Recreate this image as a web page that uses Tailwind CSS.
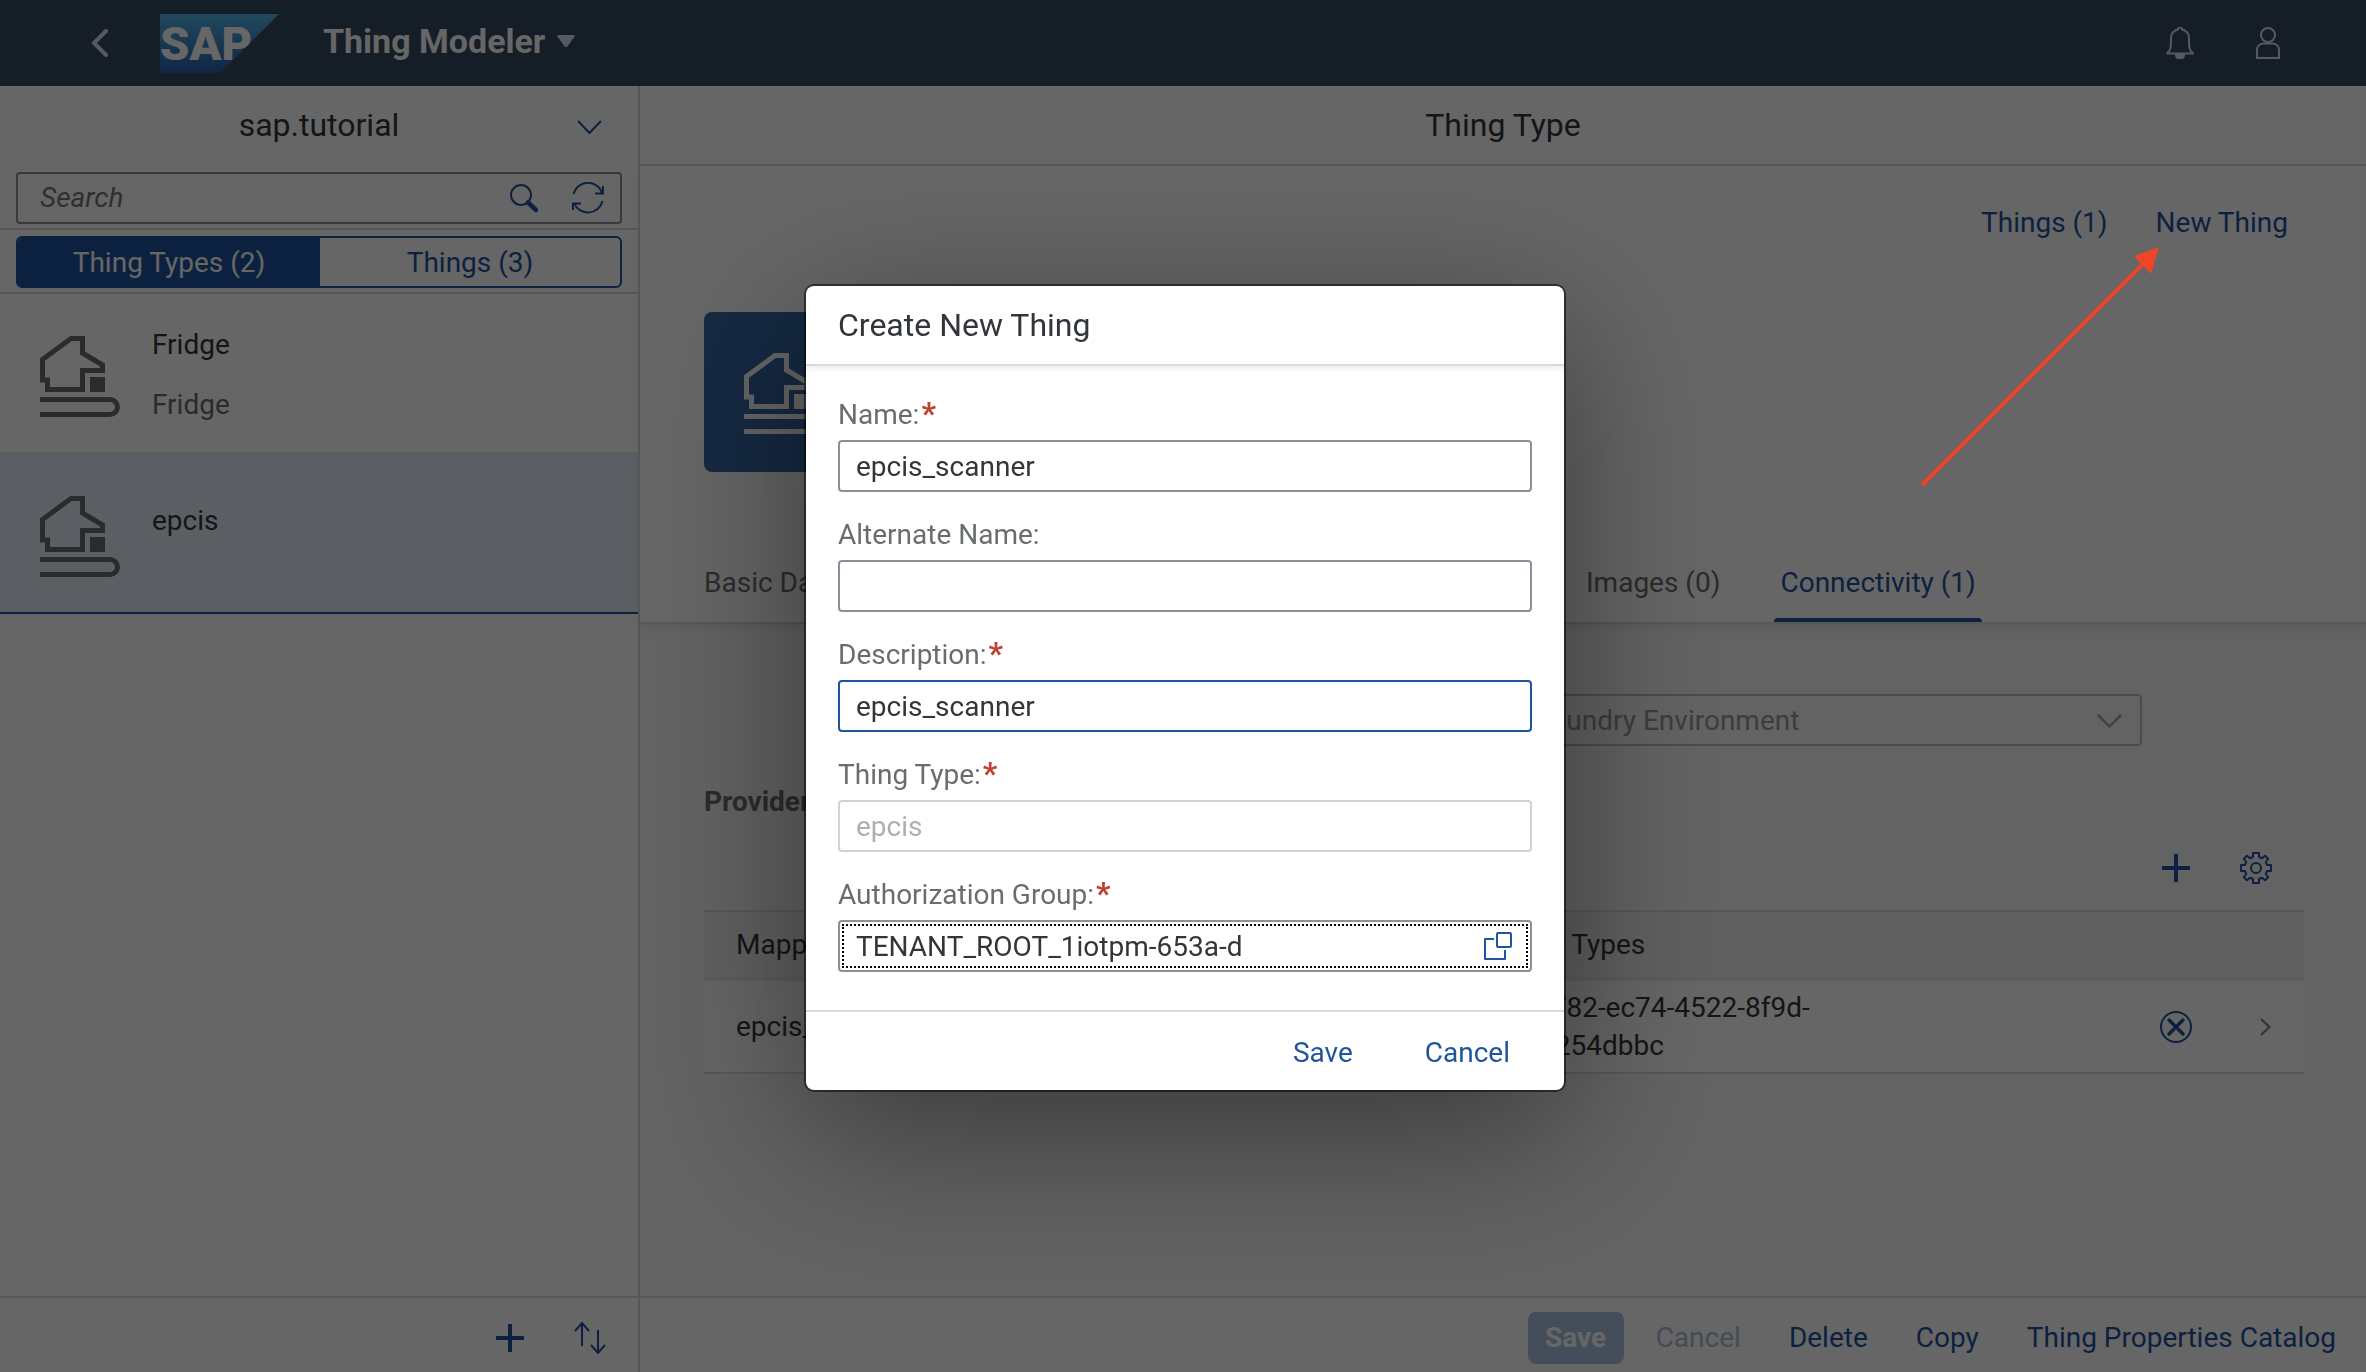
<!DOCTYPE html>
<html lang="en">
<head>
<meta charset="utf-8">
<title>Thing Modeler</title>
<script src="https://cdn.jsdelivr.net/npm/@tailwindcss/browser@4"></script>
</head>
<body class="font-['Roboto',sans-serif] text-[28px] leading-[38px] text-[#32363a]">

<svg class="hidden" aria-hidden="true">
  <symbol id="house" viewBox="0 0 80 82">
    <path d="M2.5 23.500 31 2.500H42.500V17L62.500 29V34.500H42.500V53.500H7.500V44H2.500Z" fill="none" stroke="currentColor" stroke-width="5"/>
    <rect x="50" y="41" width="15" height="15" fill="currentColor"/>
    <path d="M0 63.500H70A7.500 7.500 0 0 1 70 78.500H0" fill="none" stroke="currentColor" stroke-width="5"/>
  </symbol>
  <symbol id="plus" viewBox="0 0 28 28">
    <path d="M14 0V28M0 14H28" stroke="currentColor" stroke-width="4" fill="none"/>
  </symbol>
</svg>

<div class="flex min-h-screen flex-col">
  <header class="flex h-[86px] shrink-0 items-center bg-[#354a5f] pr-[86px] pl-[91px] text-white">
    <button type="button" aria-label="Back" class="text-[#d1e0ee]">
      <svg class="h-7 w-[18px]" viewBox="0 0 18 28" fill="none" stroke="currentColor" stroke-width="4" stroke-linecap="round"><path d="M15 2 3 14 15 26"/></svg>
    </button>
    <svg class="ml-[51px] h-[59px] w-[119px]" viewBox="0 0 119 59" role="img" aria-label="SAP">
      <defs><linearGradient id="sap" x1="0" y1="0" x2="0" y2="1"><stop offset="0" stop-color="#52b5e8"/><stop offset="1" stop-color="#2660ac"/></linearGradient></defs>
      <path d="M0 0H119L60 59H0Z" fill="url(#sap)"/>
      <text x="0" y="46" fill="#fff" font-family="Roboto" font-weight="900" font-size="47">SAP</text>
    </svg>
    <button type="button" class="ml-11 flex items-center gap-3 pb-1 text-[34px] font-bold">Thing Modeler
      <svg class="h-3 w-[18px] text-[#d1e0ee]" viewBox="0 0 18 12" fill="currentColor"><path d="M1 0H17L18 1 10 12H8L0 1Z"/></svg>
    </button>
    <div class="ml-auto flex gap-[62px] text-[#d1e0ee]">
      <button type="button" aria-label="Notifications"><svg class="h-8 w-7" viewBox="0 0 28 32" fill="none" stroke="currentColor" stroke-width="2"><path d="M12 2.500a2 2 0 0 1 4 0c4 1 7 4 7 9 0 9 0 11 4 15H1c4-4 4-6 4-15 0-5 3-8 7-9Z" stroke-linejoin="round"/><path d="M10 28a4 4 0 0 0 8 0Z" fill="currentColor"/></svg></button>
      <button type="button" aria-label="User"><svg class="h-8 w-6" viewBox="0 0 24 32" fill="none" stroke="currentColor" stroke-width="2"><circle cx="12" cy="8" r="7"/><path d="M1 31V23c0-4 3-6.500 7-6.500h8c4 0 7 2.500 7 6.500v8Z"/></svg></button>
    </div>
  </header>

  <div class="flex flex-1">
    <aside class="flex w-160 shrink-0 flex-col border-r-2 border-[#d9d9d9] bg-white">
      <div class="relative flex h-[78px] items-center justify-center">
        <h2 class="text-[32px]">sap.tutorial</h2>
        <button type="button" aria-label="Choose package" class="absolute right-9 text-[#1f549e]"><svg class="mt-1 h-[14px] w-[25px]" viewBox="0 0 25 14" fill="none" stroke="currentColor" stroke-width="2"><path d="M1 1 12.500 13 24 1"/></svg></button>
      </div>
      <div class="border-b-2 border-[#d9d9d9] px-4 pt-2 pb-1">
        <div class="flex h-13 items-center rounded-sm border-2 border-[#89919a] pr-4 pl-[22px] text-[#1f549e]">
          <input type="search" aria-label="Search" placeholder="Search" class="min-w-0 flex-1 outline-none placeholder:text-[#74777a] placeholder:italic">
          <button type="button" aria-label="Search"><svg class="h-[29px] w-7" viewBox="0 0 28 29" fill="none" stroke="currentColor" stroke-width="2"><circle cx="11" cy="11" r="10"/><path d="M18 18.500 26 26" stroke-width="4.500" stroke-linecap="round"/></svg></button>
          <button type="button" aria-label="Refresh" class="ml-[34px]"><svg class="h-8 w-8" viewBox="0 0 32 32" fill="none" stroke="currentColor" stroke-width="2"><path d="M1.500 12A15 15 0 0 1 30.500 12M31 4V11.500H23M30.500 19A15 15 0 0 1 2 21M1 28V21.500H9"/></svg></button>
        </div>
      </div>
      <div class="border-b-2 border-[#d9d9d9] px-4 pt-[6px] pb-1">
        <div class="flex h-13 overflow-hidden rounded-md border-2 border-[#1f549e]">
          <button type="button" class="w-[302px] bg-[#1f549e] pt-[2px] text-white">Thing Types (2)</button>
          <button type="button" class="flex-1 pt-[2px] text-[#1f549e]">Things (3)</button>
        </div>
      </div>
      <ul>
        <li class="flex h-40 gap-8 border-b-2 border-[#e4e4e4] pl-10">
          <svg class="mt-[42px] h-[82px] w-20 text-[#6a6d70]"><use href="#house"/></svg>
          <div class="pt-8"><p>Fridge</p><p class="mt-[22px] text-[#6a6d70]">Fridge</p></div>
        </li>
        <li class="flex h-40 gap-8 border-b-2 border-[#1f549e] bg-[#e4edf8] pl-10">
          <svg class="mt-[42px] h-[82px] w-20 text-[#6a6d70]"><use href="#house"/></svg>
          <p class="pt-12">epcis</p>
        </li>
      </ul>
      <div class="mt-auto flex h-[76px] items-center justify-end gap-[50px] border-t-2 border-[#d9d9d9] pt-[6px] pr-8 text-[#1f549e]">
        <button type="button" aria-label="Add"><svg class="h-7 w-7"><use href="#plus"/></svg></button>
        <button type="button" aria-label="Sort"><svg class="h-8 w-8" viewBox="0 0 32 32" fill="none" stroke="currentColor" stroke-width="2"><path d="M8 24V1M1 9 8 1 15 9M24 8V31M17 23 24 31 31 23"/></svg></button>
      </div>
    </aside>

    <main class="flex min-w-0 flex-1 flex-col bg-[#f7f7f7]">
      <h1 class="flex h-20 items-center justify-center border-b-2 border-[#d9d9d9] bg-white text-[32px]">Thing Type</h1>
      <section class="border-b-2 border-[#d9d9d9] bg-white px-16 pt-[38px] shadow-[0_4px_8px_rgba(0,0,0,0.08)]">
        <div class="flex justify-end gap-12 pr-[14px] text-[#1f549e]">
          <a href="#">Things (1)</a><a href="#">New Thing</a>
        </div>
        <div class="mt-[70px] flex h-40 w-40 items-center justify-center rounded-lg bg-[#3768a6] pt-1 text-white">
          <svg class="h-[82px] w-20"><use href="#house"/></svg>
        </div>
        <nav class="mt-[70px] flex h-20 items-stretch">
          <a href="#" class="flex w-[882px] items-center pt-[2px] text-[#6a6d70]">Basic Data</a>
          <a href="#" class="flex items-center pt-[2px] text-[#6a6d70]">Images (0)</a>
          <a href="#" class="relative ml-[54px] flex items-center px-[6px] pt-[2px] text-[#1f549e]">Connectivity (1)<span class="absolute inset-x-0 bottom-0 h-1 rounded-t-sm bg-[#1f549e]"></span></a>
        </nav>
      </section>

      <section class="flex-1 pt-[70px] pr-[62px] pl-16">
        <div class="relative ml-auto mr-[162px] w-[704px]">
          <select disabled aria-label="Environment" class="block h-13 w-full appearance-none rounded-sm border-2 border-[#bcbcbc] pt-[2px] pl-4 text-[#989898] opacity-100"><option>Cloud Foundry Environment</option></select>
          <svg class="pointer-events-none absolute top-5 right-5 h-[14px] w-[25px] text-[#98a9c4]" viewBox="0 0 25 14" fill="none" stroke="currentColor" stroke-width="2.500" stroke-linecap="round"><path d="M1.500 1.500 12.500 12.500 23.500 1.500"/></svg>
        </div>
        <h3 class="mt-9 leading-10 font-bold text-[#6a6d70]">Provider</h3>
        <div class="mt-1 flex h-[84px] items-center justify-end gap-[50px] pr-8 text-[#1f549e]">
          <button type="button" aria-label="Add mapping"><svg class="h-7 w-7"><use href="#plus"/></svg></button>
          <button type="button" aria-label="Settings"><svg class="h-8 w-8" viewBox="0 0 32 32" fill="none" stroke="currentColor" stroke-width="2" stroke-linejoin="round"><path d="M13 1H19V5L22 6.200 25 3.800 28.200 7 25.800 10 27 13H31V19H27L25.800 22 28.200 25 25 28.200 22 25.800 19 27V31H13V27L10 25.800 7 28.200 3.800 25 6.200 22 5 19H1V13H5L6.200 10 3.800 7 7 3.800 10 6.200 13 5Z"/><circle cx="16" cy="16" r="5"/></svg></button>
        </div>
        <table class="w-full table-fixed border-y-2 border-[#d9d9d9] text-left">
          <thead class="border-b-4 border-[#e8e8e8] bg-[#f0f0f0]">
            <tr class="h-[68px]"><th scope="col" class="w-[742px] pl-8 font-normal">Mapping</th><th scope="col" class="pl-8 font-normal">Sensor Types</th><th class="w-24" aria-label="Remove"></th><th class="w-16" aria-label="Open"></th></tr>
          </thead>
          <tbody class="bg-white">
            <tr class="h-[94px]">
              <td class="pl-8">epcis_mapping</td>
              <td class="pl-8">1b6f0782-ec74-4522-8f9d-<br>0c6e1254dbbc</td>
              <td><button type="button" aria-label="Remove" class="ml-4 block text-[#1f549e]"><svg class="h-8 w-8" viewBox="0 0 32 32" fill="none" stroke="currentColor" stroke-width="2"><circle cx="16" cy="16" r="15"/><path d="M9 9 23 23M23 9 9 23" stroke-width="3.500" stroke-linecap="round"/></svg></button></td>
              <td><svg class="ml-5 h-[18px] w-[11px] text-[#7a7d80]" viewBox="0 0 11 18" fill="none" stroke="currentColor" stroke-width="2"><path d="M1 1 9.500 9 1 17"/></svg></td>
            </tr>
          </tbody>
        </table>
      </section>

      <footer class="flex h-[76px] items-center justify-end gap-4 border-t-2 border-[#d9d9d9] bg-white pt-[6px] pr-[14px] text-[#1f549e]">
        <button type="button" disabled class="h-13 w-24 rounded-lg bg-[#aac0e0] font-bold text-white">Save</button>
        <button type="button" disabled class="px-4 text-[#aab9d6]">Cancel</button>
        <button type="button" class="px-4">Delete</button>
        <button type="button" class="px-4">Copy</button>
        <button type="button" class="px-4">Thing Properties Catalog</button>
      </footer>
    </main>
  </div>
</div>

<div class="fixed inset-0 flex items-center justify-center bg-black/60 pt-1 pl-1">
  <div role="dialog" aria-modal="true" aria-labelledby="dlg-title" class="w-[758px] rounded-lg bg-white shadow-[0_0_0_2px_rgba(0,0,0,0.5),0_40px_160px_rgba(0,0,0,0.45)]">
    <h2 id="dlg-title" class="flex h-20 items-center rounded-t-lg border-b-2 border-[#d9d9d9] px-8 text-[32px] shadow-[0_3px_6px_rgba(0,0,0,0.08)]">Create New Thing</h2>
    <form class="flex flex-col gap-6 px-8 pt-[30px] pb-[38px]">
      <div class="flex flex-col gap-[6px]">
        <label for="name" class="text-[#6a6d70]">Name:<span class="ml-[2px] text-[32px] leading-none font-bold text-[#bf4136]">*</span></label>
        <input id="name" type="text" value="epcis_scanner" class="h-13 rounded-sm border-2 border-[#89919a] px-4 outline-none">
      </div>
      <div class="flex flex-col gap-[6px]">
        <label for="alt" class="text-[#6a6d70]">Alternate Name:</label>
        <input id="alt" type="text" class="h-13 rounded-sm border-2 border-[#89919a] px-4 outline-none">
      </div>
      <div class="flex flex-col gap-[6px]">
        <label for="desc" class="text-[#6a6d70]">Description:<span class="ml-[2px] text-[32px] leading-none font-bold text-[#bf4136]">*</span></label>
        <input id="desc" type="text" value="epcis_scanner" class="h-13 rounded-sm border-2 border-[#1f549e] px-4 outline-none">
      </div>
      <div class="flex flex-col gap-[6px]">
        <label for="type" class="text-[#6a6d70]">Thing Type:<span class="ml-[2px] text-[32px] leading-none font-bold text-[#bf4136]">*</span></label>
        <input id="type" type="text" value="epcis" disabled class="h-13 rounded-sm border-2 border-[#cfd3d7] px-4 text-[#adafb0]">
      </div>
      <div class="flex flex-col gap-[6px]">
        <label for="auth" class="text-[#6a6d70]">Authorization Group:<span class="ml-[2px] text-[32px] leading-none font-bold text-[#bf4136]">*</span></label>
        <div class="flex h-13 rounded-sm border-2 border-[#89919a] p-[2px]">
          <div class="flex flex-1 items-center border-2 border-dotted border-black pr-3.5 pl-3">
            <input id="auth" type="text" value="TENANT_ROOT_1iotpm-653a-d" class="min-w-0 flex-1 pt-[2px] outline-none">
            <button type="button" aria-label="Choose group" class="text-[#1f549e]"><svg class="h-7 w-7" viewBox="0 0 28 28" fill="none" stroke="currentColor" stroke-width="2" stroke-linejoin="round"><rect x="13" y="1" width="14" height="14" rx="1"/><path d="M10 7H1V27H21V18"/></svg></button>
          </div>
        </div>
      </div>
    </form>
    <div class="flex h-20 items-center justify-end gap-10 border-t-2 border-[#d9d9d9] pt-1 pr-[38px] text-[#1f549e]">
      <button type="button" class="px-4">Save</button>
      <button type="button" class="px-4">Cancel</button>
    </div>
  </div>
</div>

<svg class="pointer-events-none absolute top-[246px] right-[205px] h-[244px] w-[242px]" viewBox="0 0 242 244" aria-hidden="true">
  <path d="M3 239 224 18" stroke="#ee4427" stroke-width="4"/>
  <path d="M240 1 215 10 232 28Z" fill="#ee4427"/>
</svg>
</body>
</html>
